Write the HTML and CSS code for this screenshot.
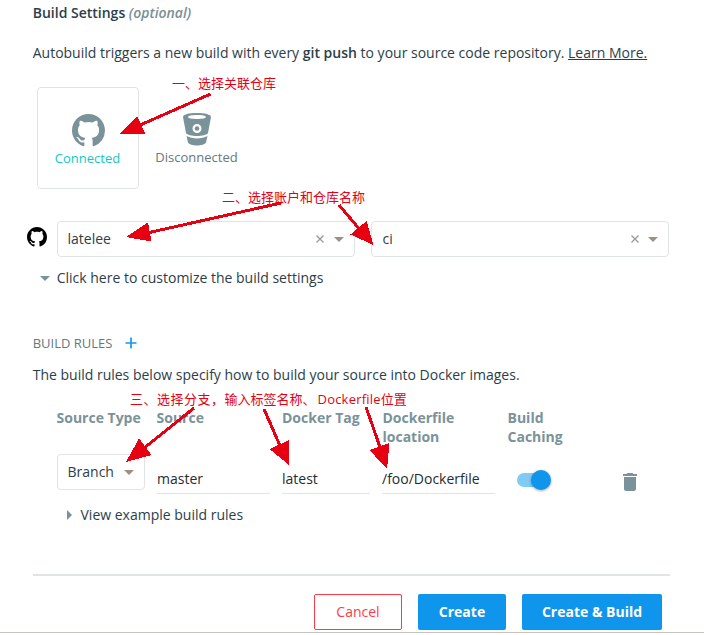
FILE: index.html
```
<!DOCTYPE html>
<html lang="en">
<head>
<meta charset="utf-8">
<title>Build Settings</title>
<link rel="stylesheet" href="styles.css">
</head>
<body>
<svg class="defs" aria-hidden="true">
  <symbol id="github" viewBox="0 0 16 16"><path d="M8 0C3.58 0 0 3.58 0 8c0 3.54 2.29 6.53 5.47 7.59.4.07.55-.17.55-.38 0-.19-.01-.82-.01-1.49-2.01.37-2.53-.49-2.69-.94-.09-.23-.48-.94-.82-1.13-.28-.15-.68-.52-.01-.53.63-.01 1.08.58 1.23.82.72 1.21 1.87.87 2.33.66.07-.52.28-.87.51-1.07-1.78-.2-3.64-.89-3.64-3.95 0-.87.31-1.59.82-2.15-.08-.2-.36-1.02.08-2.12 0 0 .67-.21 2.2.82.64-.18 1.32-.27 2-.27s1.36.09 2 .27c1.53-1.04 2.2-.82 2.2-.82.44 1.1.16 1.92.08 2.12.51.56.82 1.27.82 2.15 0 3.07-1.87 3.75-3.65 3.95.29.25.54.73.54 1.48 0 1.07-.01 1.93-.01 2.2 0 .21.15.46.55.38A8.01 8.01 0 0 0 16 8c0-4.42-3.58-8-8-8z"/></symbol>
</svg>
<main class="page">
  <h2 class="title">Build Settings <em>(optional)</em></h2>
  <p class="intro">Autobuild triggers a new build with every <b>git push</b> to your source code repository. <a>Learn More.</a></p>

  <div class="providers">
    <div class="provider connected">
      <svg class="gh"><use href="#github"/></svg>
      <span>Connected</span>
    </div>
    <div class="provider">
      <svg class="bb" viewBox="0 0 28 33"><path fill-rule="evenodd" d="M0 4C0 1.500 6 0 14 0s14 1.500 14 4l-3 16c-1 2-6 3-11 3S4 22 3 20zM5 4c0 1.200 4 2 9 2s9-.8 9-2-4-2-9-2-9 .8-9 2zM14 11a4.500 4.500 0 1 0 0 9 4.500 4.500 0 0 0 0-9z"/><circle cx="14" cy="15.500" r="2.300"/><path d="M3.500 23c3 1.700 6.500 2.400 10.500 2.400S21.500 24.700 24.500 23L23 29.500c-1 2-5 3-9 3s-8-1-9-3z"/></svg>
      <span>Disconnected</span>
    </div>
  </div>

  <div class="repo">
    <svg class="gh-small"><use href="#github"/></svg>
    <div class="select account"><span>latelee</span><svg class="clear" viewBox="0 0 8 8"><path d="M.5.5l7 7M7.500.5l-7 7"/></svg><i class="caret"></i></div>
    <div class="select project"><span>ci</span><svg class="clear" viewBox="0 0 8 8"><path d="M.5.5l7 7M7.500.5l-7 7"/></svg><i class="caret"></i></div>
  </div>
  <div class="customize"><i class="caret slate"></i><span>Click here to customize the build settings</span></div>

  <div class="rules-title"><span>BUILD RULES</span><svg viewBox="0 0 12 12"><path d="M6 .5v11M.5 6h11"/></svg></div>
  <p class="rules-text">The build rules below specify how to build your source into Docker images.</p>

  <div class="rules head">
    <b>Source Type</b><b>Source</b><b>Docker Tag</b><b>Dockerfile location</b><b>Build Caching</b>
  </div>
  <div class="rules row">
    <div class="select branch"><span>Branch</span><i class="caret"></i></div>
    <div class="field">master</div>
    <div class="field">latest</div>
    <div class="field">/foo/Dockerfile</div>
    <div class="toggle"><i class="knob"></i></div>
    <svg class="trash" viewBox="0 0 14 18"><path d="M0 1h3.500l1-1h5l1 1H14v2H0zM1 4h12v12a2 2 0 0 1-2 2H3a2 2 0 0 1-2-2z"/></svg>
  </div>
  <div class="examples"><i class="arrow-right"></i><span>View example build rules</span></div>

  <div class="actions">
    <button class="btn cancel">Cancel</button>
    <button class="btn">Create</button>
    <button class="btn wide">Create &amp; Build</button>
  </div>
</main>
<div class="bottom-line"></div>

<div class="notes" lang="zh-CN">
  <svg viewBox="0 0 704 635">
    <g class="shafts"><path d="M210.500 94L138 126M281 203L147 233M339 205L361 231M194 408L143 449M264 409L281 448M366 407L381 450"/></g>
    <path d="M120 134l17-18 8 17.500zM126 237l22-14.500 3.500 19zM373.500 245l-7-24-16 13.500zM126 462l13-23.500 12.500 16.500zM289 465l.5-25-20 9zM387 469l2.500-26-20 7z"/>
  </svg>
  <span class="note one">一、选择关联仓库</span>
  <span class="note two">二、选择账户和仓库名称</span>
  <span class="note three"><span class="spaced">三、选择分支，</span>输入标签名称、<span class="latin">Dockerfile</span>位置</span>
</div>
</body>
</html>
```
FILE: styles.css
```
* { box-sizing: border-box; }
body {
  margin: 0;
  position: relative;
  height: 635px;
  overflow: hidden;
  background: #fff;
  color: #2b3e49;
  font: 14px/20px "Open Sans", "Noto Sans CJK SC", sans-serif;
}
.defs { display: none; }
svg { display: block; flex: none; }
.page { height: 632px; padding: 3px 34px 0 33px; }
.title { margin: 0; font-size: 14px; font-weight: 600; }
.title em { color: #7a8f95; }
.title, .intro, .rules-text, .rules-title span, .customize span { text-indent: -.3px; }
.intro { margin: 20px 0 0; }
.intro b { font-weight: 600; }
.intro a { text-decoration: underline; }

.providers { display: flex; gap: 7px; margin: 24px 0 0 4px; }
.provider {
  width: 102px;
  height: 102px;
  padding-top: 25px;
  display: flex;
  flex-direction: column;
  align-items: center;
  font-size: 13px;
  line-height: 18px;
  color: #647980;
}
.provider span { margin-left: -1px; }
.connected { border: 1px solid #e0e4e5; border-radius: 4px; color: #12c8c6; }
.gh { width: 33px; height: 33px; margin: 1px 0 2px; fill: #7a9299; }
.bb { width: 28px; height: 33px; margin: 1px 0 2px; fill: #7a9299; }

.repo { display: flex; align-items: center; margin: 32px 1px 0 -6px; gap: 16px; }
.gh-small { width: 20px; height: 20px; margin: -4px -6px 0 0; fill: #000; }
.select {
  width: 298px;
  height: 36px;
  padding: 0 10px 0 9.500px;
  display: flex;
  align-items: center;
  border: 1px solid #e0e4e5;
  border-radius: 4px;
}
.select.project { padding-left: 10.500px; }
.select span { flex: 1; }
.clear { width: 8px; height: 8px; margin: -1px 9px 0 0; stroke: #999; stroke-width: 1.300; }
.account .clear { margin-right: 10px; }
.caret { border: 5px solid transparent; border-top-color: #999186; border-bottom: 0; }
.caret.slate { border-top-color: #7a9299; }
.customize { display: flex; align-items: center; gap: 7px; margin: 11px 0 0 7px; }

.rules-title { display: flex; align-items: center; gap: 12.500px; margin-top: 45px; font-size: 13px; color: #647980; }
.rules-title svg { width: 12px; height: 12px; stroke: #1898ec; stroke-width: 1.700; }
.rules-text { margin: 12px 0 0; }

.rules { display: grid; grid-template-columns: 88px 113px 88px 113px 104px 14px; column-gap: 12px; margin-left: 24px; }
.head { margin-top: 23px; line-height: 19px; color: #7a9299; white-space: nowrap; }
.head b:nth-child(-n+2) { text-indent: -.5px; }
.head b:nth-child(n+4) { width: 80px; padding-left: .5px; white-space: normal; }
.row { margin-top: 8px; height: 40px; align-items: start; }
.select.branch { width: 88px; }
.field { height: 40px; padding-top: 15px; border-bottom: 1px solid #e0e4e5; color: #222d33; }
.toggle { width: 31px; height: 14px; margin: 19px 0 0 10px; border-radius: 7px; background: #7fcbf5; display: flex; align-items: center; justify-content: flex-end; }
.knob { flex: none; width: 20px; height: 20px; margin-right: -3px; border-radius: 50%; background: #0f95ec; box-shadow: 0 1px 3px rgba(0,0,0,.35); }
.trash { width: 14px; height: 18px; margin-top: 19px; fill: #7a9299; }
.examples { display: flex; align-items: center; gap: 8.500px; margin: 11px 0 0 34px; }
.arrow-right { border: 5px solid transparent; border-left-color: #7a9299; border-right: 0; }

.actions { display: flex; justify-content: flex-end; gap: 16px; margin: 49px 0 0; padding: 18px 8px 0 0; border-top: 2px solid #e0e4e4; }
.btn { width: 88px; height: 36px; padding: 0; border: 0; border-radius: 2px; background: #1095ec; color: #fff; font: bold 14px/20px "Open Sans", sans-serif; }
.btn.cancel { border: 1px solid #ff3b49; background: #fff; color: #ff3b49; font-weight: 400; }
.btn.wide { width: 140px; }
.bottom-line { height: 1px; background: #c8c5bc; }

.notes { position: absolute; inset: 0; color: #e60012; }
.notes svg { width: 704px; height: 635px; fill: #e60012; shape-rendering: crispEdges; }
.shafts { stroke: #e60012; stroke-width: 3; }
.note { position: absolute; font: 13px/20px "Noto Sans CJK SC", sans-serif; white-space: nowrap; }
.one { left: 172px; top: 73px; }
.two { left: 222px; top: 187px; }
.three { left: 130px; top: 389px; }
.spaced { letter-spacing: .5px; }
.latin { margin-left: 2px; font-family: "Open Sans", sans-serif; letter-spacing: .2px; }
```
